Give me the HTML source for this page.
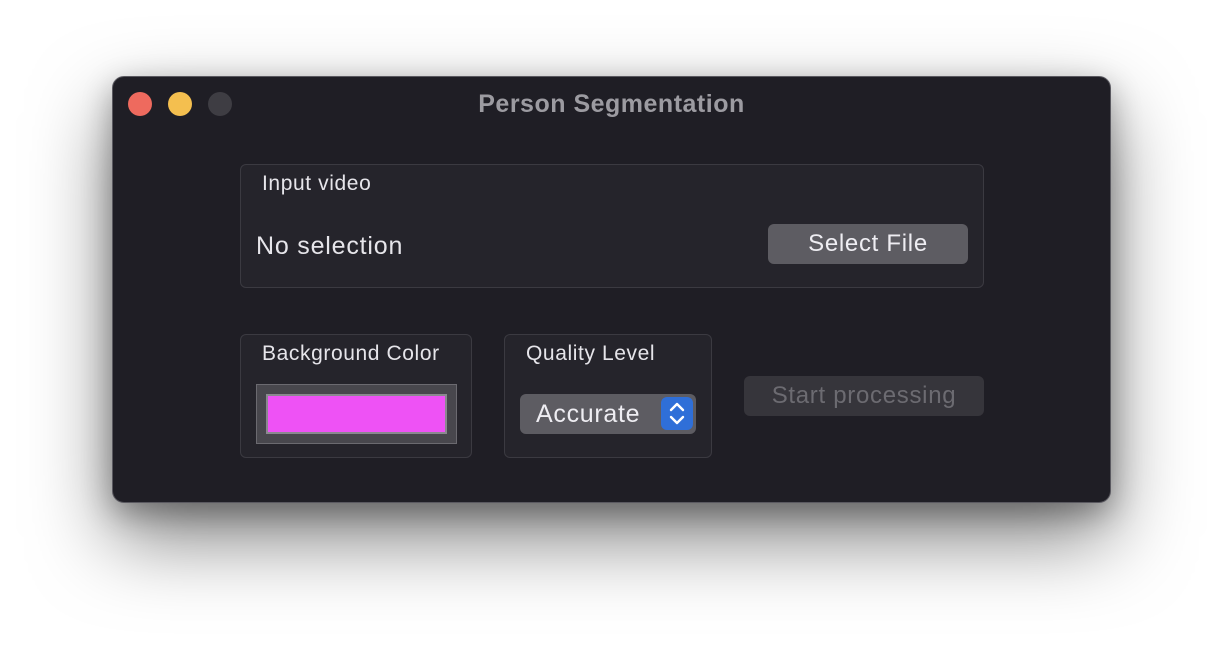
<!DOCTYPE html>
<html><head><meta charset="utf-8"><style>
*{margin:0;padding:0;box-sizing:border-box}
body{width:1224px;height:652px;background:#fff;position:relative;overflow:hidden;font-family:"Liberation Sans",sans-serif}
.win{position:absolute;left:112px;top:76px;width:999px;height:427px;border-radius:12px;background:#1f1e25;border:1px solid #5a5960;box-shadow:0 35px 80px rgba(0,0,0,.5),0 10px 30px rgba(0,0,0,.3)}
.dot{position:absolute;top:15px;width:24px;height:24px;border-radius:50%}
.title{position:absolute;top:13px;left:0;width:100%;text-align:center;color:#9c9ba1;font-weight:bold;font-size:25px;letter-spacing:0.5px}
.box{position:absolute;border:1px solid #3b3a41;background:#25242b;border-radius:6px}
.lbl{position:absolute;color:#e6e5ea;font-size:21px;letter-spacing:0.6px;white-space:nowrap}
.btn{position:absolute;border-radius:6px;background:#5d5c62;color:#eeedf2;font-size:24px;letter-spacing:0.7px;text-align:center;white-space:nowrap}
</style></head><body>
<div class="win">
 <div class="dot" style="left:15px;background:#ee6a5e"></div>
 <div class="dot" style="left:55px;background:#f4bf4f"></div>
 <div class="dot" style="left:95px;background:#3e3d43"></div>
 <div class="title">Person Segmentation</div>
 <div class="box" style="left:127px;top:87px;width:744px;height:124px">
   <div class="lbl" style="left:21px;top:7px">Input video</div>
   <div class="lbl" style="left:15px;top:67px;font-size:25px;letter-spacing:0.8px">No selection</div>
   <div class="btn" style="left:527px;top:59px;width:200px;height:40px;line-height:40px">Select File</div>
 </div>
 <div class="box" style="left:127px;top:257px;width:232px;height:124px">
   <div class="lbl" style="left:21px;top:7px">Background Color</div>
   <div style="position:absolute;left:15px;top:49px;width:201px;height:60px;background:#48474d;border:1px solid #6b6a70">
     <div style="position:absolute;left:9px;top:9px;width:181px;height:40px;background:#ee52f5;border:2px solid #8a898f"></div>
   </div>
 </div>
 <div class="box" style="left:391px;top:257px;width:208px;height:124px">
   <div class="lbl" style="left:21px;top:7px">Quality Level</div>
   <div class="btn" style="left:15px;top:59px;width:176px;height:40px;line-height:40px;text-align:left;padding-left:16px;font-size:25px">Accurate
     <div style="position:absolute;right:3px;top:3px;width:32px;height:33px;border-radius:6px;background:#2f6fd8">
      <svg width="32" height="33" viewBox="0 0 32 33" style="display:block"><path d="M10 13 L16 7 L22 13 M10 20 L16 26 L22 20" fill="none" stroke="#fff" stroke-width="2.4" stroke-linecap="round" stroke-linejoin="round"/></svg>
     </div>
   </div>
 </div>
 <div class="btn" style="left:631px;top:299px;width:240px;height:40px;line-height:40px;background:#36353b;color:#6c6b71">Start processing</div>
</div>
</body></html>
